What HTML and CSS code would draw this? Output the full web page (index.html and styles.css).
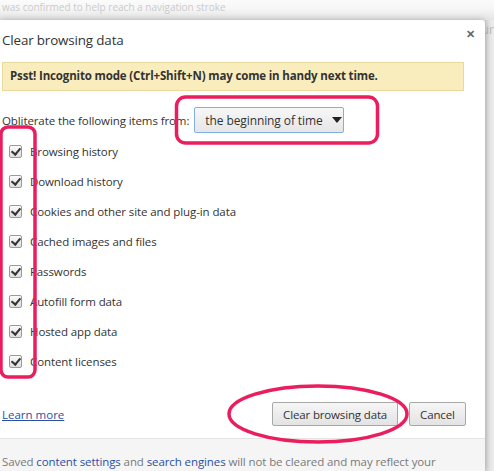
FILE: index.html
```html
<!DOCTYPE html>
<html>
<head>
<meta charset="utf-8">
<link rel="stylesheet" href="styles.css">
</head>
<body>
<div class="page">
  <div class="backdrop-top"><span class="ghost">was confirmed to help reach a navigation stroke</span></div>
  <div class="dialog-row">
    <div class="dialog">
      <div class="header">
        <h1 class="title">Clear browsing data</h1>
        <span class="close">&#x2715;</span>
      </div>
      <div class="banner">Psst! Incognito mode (Ctrl+Shift+N) may come in handy next time.</div>
      <div class="range">
        <span class="range-label">Obliterate the following items from:</span>
        <span class="select">the beginning of time <span class="caret"></span></span>
      </div>
      <ul class="items">
        <li class="item"><span class="box"></span>Browsing history</li>
        <li class="item"><span class="box"></span>Download history</li>
        <li class="item"><span class="box"></span>Cookies and other site and plug-in data</li>
        <li class="item"><span class="box"></span>Cached images and files</li>
        <li class="item"><span class="box"></span>Passwords</li>
        <li class="item"><span class="box"></span>Autofill form data</li>
        <li class="item"><span class="box"></span>Hosted app data</li>
        <li class="item"><span class="box"></span>Content licenses</li>
      </ul>
      <div class="actions">
        <a class="learn" href="#">Learn more</a>
        <span class="buttons">
          <button class="btn">Clear browsing data</button>
          <button class="btn">Cancel</button>
        </span>
      </div>
      <div class="footer">Saved <a href="#">content settings</a> and <a href="#">search engines</a> will not be cleared and may reflect your</div>
    </div>
    <div class="side"><span class="side-text">ur</span></div>
  </div>
  <svg class="marks" width="494" height="471" viewBox="0 0 494 471">
    <rect x="1" y="127" width="34" height="250" rx="7" fill="none" stroke="#ea1d5e" stroke-width="3.5"/>
    <rect x="176.5" y="97" width="201" height="46" rx="9" fill="none" stroke="#ea1d5e" stroke-width="3.5"/>
    <ellipse cx="318" cy="414" rx="89" ry="28" fill="none" stroke="#ea1d5e" stroke-width="3.5"/>
  </svg>
</div>
</body>
</html>
```
FILE: styles.css
```css
* { box-sizing: border-box; }
html, body { margin: 0; padding: 0; }
body {
  font-family: "Open Sans", "Noto Sans", sans-serif;
  background: #ececec;
  width: 494px;
  height: 471px;
  overflow: hidden;
}
.page { position: relative; width: 494px; height: 471px; overflow: hidden; }
.backdrop-top {
  height: 20px;
  background: linear-gradient(#fbfbfb 0, #f7f7f7 8px, #e4e4e4 20px);
  padding-top: 1px;
}
.ghost {
  display: block;
  padding-left: 2px;
  font-size: 10px;
  line-height: 12px;
  color: #cacaca;
}
.dialog-row { display: flex; height: 451px; }
.dialog {
  width: 485px;
  background: #fff;
  border-top-right-radius: 4px;
  box-shadow: 0 0 6px rgba(0,0,0,0.25);
  position: relative;
  z-index: 1;
  display: flex;
  flex-direction: column;
}
.side {
  flex: 1;
  background: linear-gradient(90deg, #d6d6d6 0, #e6e6e6 5px, #ececec 9px);
  font-size: 12px;
  color: #b8b8b8;
}
.side-text { display: block; margin-top: 1px; margin-left: -3px; }
.header { display: flex; justify-content: space-between; align-items: flex-start; height: 42px; }
.title {
  margin: 11px 0 0 2px;
  font-size: 13.4px;
  font-weight: 400;
  color: #333;
  letter-spacing: -0.15px;
}
.close {
  margin: 6px 10px 0 0;
  font-size: 11px;
  font-weight: 700;
  color: #666;
}
.banner {
  margin: 0 21px 0 2px;
  height: 29px;
  background: #f9edbe;
  border: 1px solid #e9d99c;
  font-size: 11.5px;
  font-weight: 700;
  color: #333;
  padding: 5px 0 0 7px;
  letter-spacing: -0.15px;
}
.range { display: flex; align-items: center; margin: 16px 0 0 2px; height: 26px; }
.range-label { font-size: 11.5px; color: #333; letter-spacing: -0.1px; }
.select {
  margin-left: 5px;
  width: 150px;
  height: 26px;
  border: 1px solid #7fb0e4;
  border-radius: 2px;
  background: linear-gradient(#f7f7f7, #e6e6e6);
  font-size: 12px;
  color: #333;
  display: flex;
  align-items: center;
  padding-left: 10px;
  gap: 9px;
  letter-spacing: -0.1px;
}
.caret {
  width: 0; height: 0;
  border-left: 5px solid transparent;
  border-right: 5px solid transparent;
  border-top: 6px solid #222;
}
.items { list-style: none; margin: 3px 0 0 0; padding: 0; }
.item {
  height: 30px;
  display: flex;
  align-items: center;
  font-size: 11.5px;
  color: #333;
  letter-spacing: -0.1px;
}
.box {
  width: 13px; height: 13px;
  margin: 0 8px 0 9px;
  border: 1px solid #9a9a9a;
  border-radius: 2px;
  background: linear-gradient(#fbfbfb, #dedede);
  position: relative;
}
.box::after {
  content: "";
  position: absolute;
  left: 3px; top: 0px;
  width: 4px; height: 7px;
  border-right: 2.2px solid #333;
  border-bottom: 2.2px solid #333;
  transform: rotate(40deg);
}
.actions {
  display: flex;
  justify-content: space-between;
  align-items: center;
  margin-top: 26px;
  height: 24px;
  padding: 0 19px 0 2px;
}
.learn { font-size: 11.5px; color: #2a4fa7; text-decoration: underline; }
.buttons { display: flex; gap: 11px; }
.btn {
  font-family: "Open Sans", "Noto Sans", sans-serif;
  font-size: 11.5px;
  color: #333;
  height: 24px;
  padding: 0 10px;
  border: 1px solid #a8a8a8;
  border-radius: 2px;
  background: linear-gradient(#f6f6f6, #e3e3e3);
  letter-spacing: -0.15px;
}
.footer {
  margin-top: 12px;
  flex: 1;
  border-top: 1px solid #e5e5e5;
  background: #f5f5f5;
  font-size: 11.5px;
  color: #7a7a7a;
  padding: 15px 0 0 2px;
  letter-spacing: -0.1px;
  white-space: nowrap;
}
.footer a { color: #2a4fa7; text-decoration: none; }
.marks { position: absolute; left: 0; top: 0; z-index: 5; pointer-events: none; }
```
